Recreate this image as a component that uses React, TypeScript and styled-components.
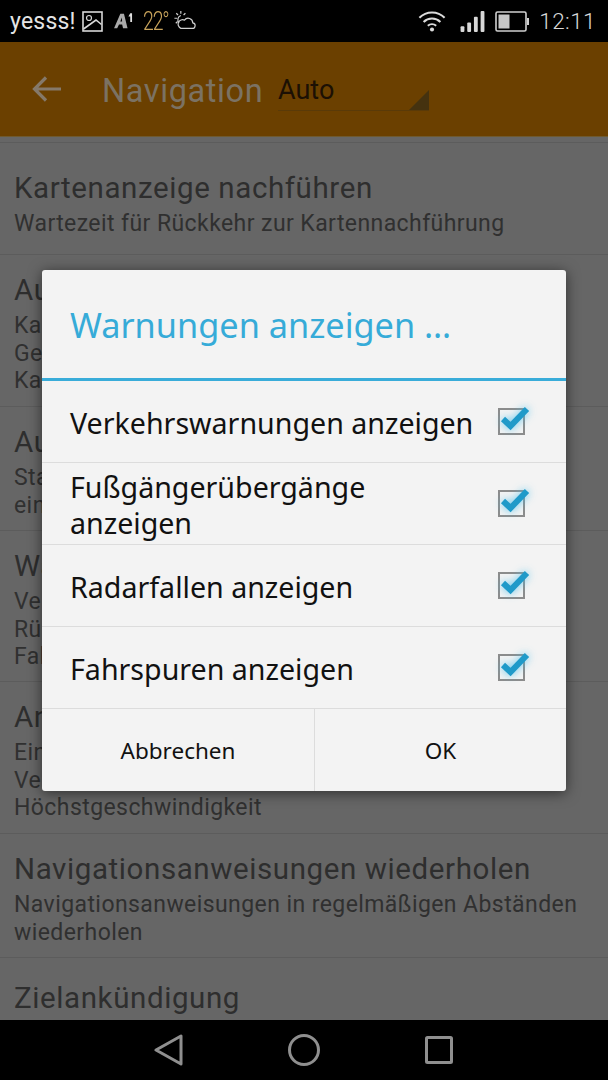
import React from "react";
import styled, { createGlobalStyle } from "styled-components";

const Global = createGlobalStyle`
  html, body { margin: 0; padding: 0; background: #000; }
  * { box-sizing: border-box; }
`;

const Screen = styled.div`
  width: 608px; height: 1080px; display: flex; flex-direction: column;
  position: relative; overflow: hidden; background: #666;
  font-family: Roboto, "Noto Sans", sans-serif;
`;
const StatusBar = styled.div`
  height: 42px; flex: none; background: #000; display: flex; align-items: center;
  padding: 0 12px 0 10px; color: #e4e4e4;
`;
const Carrier = styled.span`font-size: 23px; line-height: 1; margin-right: 6px; letter-spacing: .2px;`;
const Temp = styled.span`
  font-size: 25px; color: #c9a45c; margin: 0 8px 0 10px; letter-spacing: -1.5px; font-weight: 300;
  width: 22px; white-space: nowrap; display: inline-block; transform: scaleX(.78); transform-origin: left;
`;
const Spacer = styled.div`flex: 1;`;
const Clock = styled.span`font-size: 22.5px; font-weight: 300; color: #d8d8d8; margin-left: 10px; letter-spacing: .4px;`;
const Toolbar = styled.div`
  height: 95px; flex: none; background: #6b4000; display: flex; align-items: center;
  padding: 0 0 0 32px; border-bottom: 1px solid #6f5a30;
`;
const NavTitle = styled.span`font-size: 32.5px; color: #7b7263; margin: 3px 0 0 40px; letter-spacing: .6px; width: 176px;`;
const Spinner = styled.div`
  width: 151px; height: 42px; margin-top: 2px; position: relative; padding: 3px 0 0 0;
  font-size: 27px; line-height: 36px; color: #1c1004; border-bottom: 1px solid #5a3a08;
`;
const SpinnerCorner = styled.div`
  position: absolute; right: 0; bottom: 0; width: 0; height: 0;
  border-style: solid; border-width: 0 0 20px 20px; border-color: transparent transparent #45320f transparent;
`;
const List = styled.div`
  flex: 1; min-height: 0; overflow: hidden; padding-top: 5px; background: #666;
  display: flex; flex-direction: column;
`;
const Row = styled.div<{ $h: number; $top: number }>`
  height: ${p => p.$h}px; flex: none; padding: ${p => p.$top}px 14px 0; border-top: 1px solid #5c5c5c;
`;
const RowTitle = styled.div`font-size: 29.5px; line-height: 36px; color: #2e2e2e; white-space: nowrap; letter-spacing: .6px;`;
const RowBody = styled.div`font-size: 23px; line-height: 27.7px; color: #303030; margin-top: 4px; letter-spacing: .42px;`;
const NavBar = styled.div`
  height: 60px; flex: none; background: #000; display: flex; align-items: center; justify-content: center;
`;
const NavSlot = styled.div`width: 135px; display: flex; justify-content: center;`;
const Dialog = styled.div`
  position: absolute; left: 42px; top: 270px; width: 524px; height: 521px; background: #f3f3f3;
  border-radius: 3px; box-shadow: 0 2px 14px rgba(0,0,0,.55); display: flex; flex-direction: column;
  font-family: "Noto Sans", "Open Sans", sans-serif;
`;
const DialogTitle = styled.div`
  height: 111px; flex: none; padding: 32px 28px 0; font-size: 34.3px; line-height: 46px; color: #36abd8;
  border-bottom: 3px solid #39acd9;
`;
const Option = styled.div`
  height: 82px; flex: none; display: flex; align-items: center; padding: 0 41px 0 28px;
  border-bottom: 1px solid #dcdcdc; justify-content: space-between;
`;
const OptionLabel = styled.div`font-size: 28.6px; line-height: 36px; color: #111; width: 410px; margin-top: 3px;`;
const Box = styled.div`
  width: 27px; height: 27px; border: 2px solid #8c8c8c; position: relative; flex: none;
`;
const Tick = styled.svg`
  position: absolute; left: -2px; top: -5px; overflow: visible;
  filter: drop-shadow(0 0 4px rgba(70,190,235,.85));
`;
const Actions = styled.div`flex: 1; display: flex;`;
const Action = styled.div<{ $w: number }>`
  width: ${p => p.$w}px; display: flex; align-items: center; justify-content: center; font-size: 22.5px; color: #111;
  padding-top: 1px; & + & { border-left: 1px solid #dcdcdc; }
`;

const rows = [
  { h: 112, top: 27, t: "Kartenanzeige nachführen", b: ["Wartezeit für Rückkehr zur Kartennachführung"] },
  { h: 152, top: 17, t: "Automatisch", b: ["Kartenansicht", "Geschwindigkeit", "Kartenzoom"] },
  { h: 124, top: 17, t: "Automatik", b: ["Startbildschirm", "einblenden"] },
  { h: 151, top: 17, t: "Warnungen", b: ["Verkehr", "Rückmeldung", "Fahrspuren"] },
  { h: 152, top: 17, t: "Ansagen", b: ["Einstellungen", "Verkehrszeichen", "Höchstgeschwindigkeit"] },
  { h: 124, top: 17, t: "Navigationsanweisungen wiederholen", b: ["Navigationsanweisungen in regelmäßigen Abständen", "wiederholen"] },
  { h: 70, top: 22, t: "Zielankündigung", b: [] as string[] },
];
const options = ["Verkehrswarnungen anzeigen", "Fußgängerübergänge anzeigen", "Radarfallen anzeigen", "Fahrspuren anzeigen"];

export default function App() {
  return (
    <Screen>
      <Global />
      <StatusBar>
        <Carrier>yesss!</Carrier>
        <svg width="21" height="21" viewBox="0 0 21 21" fill="none" stroke="#d8d8d8" strokeWidth="1.6">
          <rect x="1" y="1" width="19" height="19" />
          <circle cx="7" cy="7" r="2.5" strokeWidth="1.2" />
          <path d="M1.5 18 L14 9 L19.5 13.5" />
        </svg>
        <svg width="19" height="18" viewBox="0 0 21 20" style={{ marginLeft: 11 }}>
          <path d="M0 18 L7 2 H11 L15 18 H10 L9 14 H5.5 L3.5 18Z" fill="#aaa" />
          <path d="M7 10.5 L8.5 6 L9 10.5Z" fill="#000" />
          <path d="M16 5 L18 1.5 H20 V11 H18 V5Z" fill="#e0e0e0" />
        </svg>
        <Temp>22°</Temp>
        <svg width="23" height="22" viewBox="0 0 24 24" fill="none" stroke="#d0d0d0" strokeWidth="1.3">
          <path d="M8 6 A5 5 0 0 0 6 14" />
          <path d="M8 1 V4 M1 9 H4 M3 3.5 L5 5.5 M13 3.5 L11 5.5 M2.5 14.5 L4.5 12.5" />
          <path d="M8 20 H20 A3 3 0 0 0 21 14 A5 5 0 0 0 12 11 A4.5 4.5 0 0 0 8 20Z" />
        </svg>
        <Spacer />
        <svg width="28" height="21" viewBox="0 0 30 22" fill="none" stroke="#dcdcdc" strokeWidth="2.2" style={{ marginRight: 14 }}>
          <path d="M1.5 7 A19 19 0 0 1 28.5 7" />
          <path d="M6 11.5 A13 13 0 0 1 24 11.5" />
          <path d="M10.5 15.5 A7 7 0 0 1 19.5 15.5" />
          <circle cx="15" cy="19.5" r="2.2" fill="#dcdcdc" stroke="none" />
        </svg>
        <svg width="25" height="21" viewBox="0 0 25 22" fill="#d8d8d8" style={{ marginRight: 10 }}>
          <rect x="0" y="16" width="4" height="6" rx="1" />
          <rect x="7" y="12" width="4" height="10" rx="1" />
          <rect x="14" y="6" width="4" height="16" rx="1" />
          <rect x="21" y="0" width="4" height="22" rx="1" />
        </svg>
        <svg width="34" height="21" viewBox="0 0 34 21" fill="none">
          <rect x="1" y="1" width="30" height="19" rx="1.5" stroke="#d0d0d0" strokeWidth="1.6" />
          <rect x="3.5" y="3.5" width="11" height="14" fill="#c8c8c8" />
          <rect x="32" y="7" width="2" height="7" fill="#d0d0d0" />
        </svg>
        <Clock>12:11</Clock>
      </StatusBar>
      <Toolbar>
        <svg width="30" height="28" viewBox="0 0 30 28" fill="none" stroke="#85796a" strokeWidth="3.2">
          <path d="M29 14 H3 M14 2.5 L2.5 14 L14 25.5" />
        </svg>
        <NavTitle>Navigation</NavTitle>
        <Spinner>Auto<SpinnerCorner /></Spinner>
      </Toolbar>
      <List>
        {rows.map(r => (
          <Row key={r.t} $h={r.h} $top={r.top}>
            <RowTitle>{r.t}</RowTitle>
            {r.b.length > 0 && <RowBody>{r.b.map(l => <div key={l}>{l}</div>)}</RowBody>}
          </Row>
        ))}
      </List>
      <NavBar>
        <NavSlot>
          <svg width="30" height="32" viewBox="0 0 30 32" fill="none" stroke="#8f8f8f" strokeWidth="3" strokeLinejoin="round">
            <path d="M27 2 V30 L2 16 Z" />
          </svg>
        </NavSlot>
        <NavSlot>
          <svg width="32" height="32" viewBox="0 0 32 32" fill="none" stroke="#8f8f8f" strokeWidth="3">
            <circle cx="16" cy="16" r="14.5" />
          </svg>
        </NavSlot>
        <NavSlot>
          <svg width="28" height="28" viewBox="0 0 28 28" fill="none" stroke="#8f8f8f" strokeWidth="3" strokeLinejoin="round">
            <rect x="1.5" y="1.5" width="25" height="25" rx="1" />
          </svg>
        </NavSlot>
      </NavBar>
      <Dialog>
        <DialogTitle>Warnungen anzeigen …</DialogTitle>
        {options.map(o => (
          <Option key={o}>
            <OptionLabel>{o}</OptionLabel>
            <Box>
              <Tick width="34" height="28" viewBox="0 0 34 28" fill="none">
                <path d="M5 14 L12.5 21 L29 4" stroke="#1f9ac9" strokeWidth="6" />
              </Tick>
            </Box>
          </Option>
        ))}
        <Actions>
          <Action $w={272}>Abbrechen</Action>
          <Action $w={252}>OK</Action>
        </Actions>
      </Dialog>
    </Screen>
  );
}
